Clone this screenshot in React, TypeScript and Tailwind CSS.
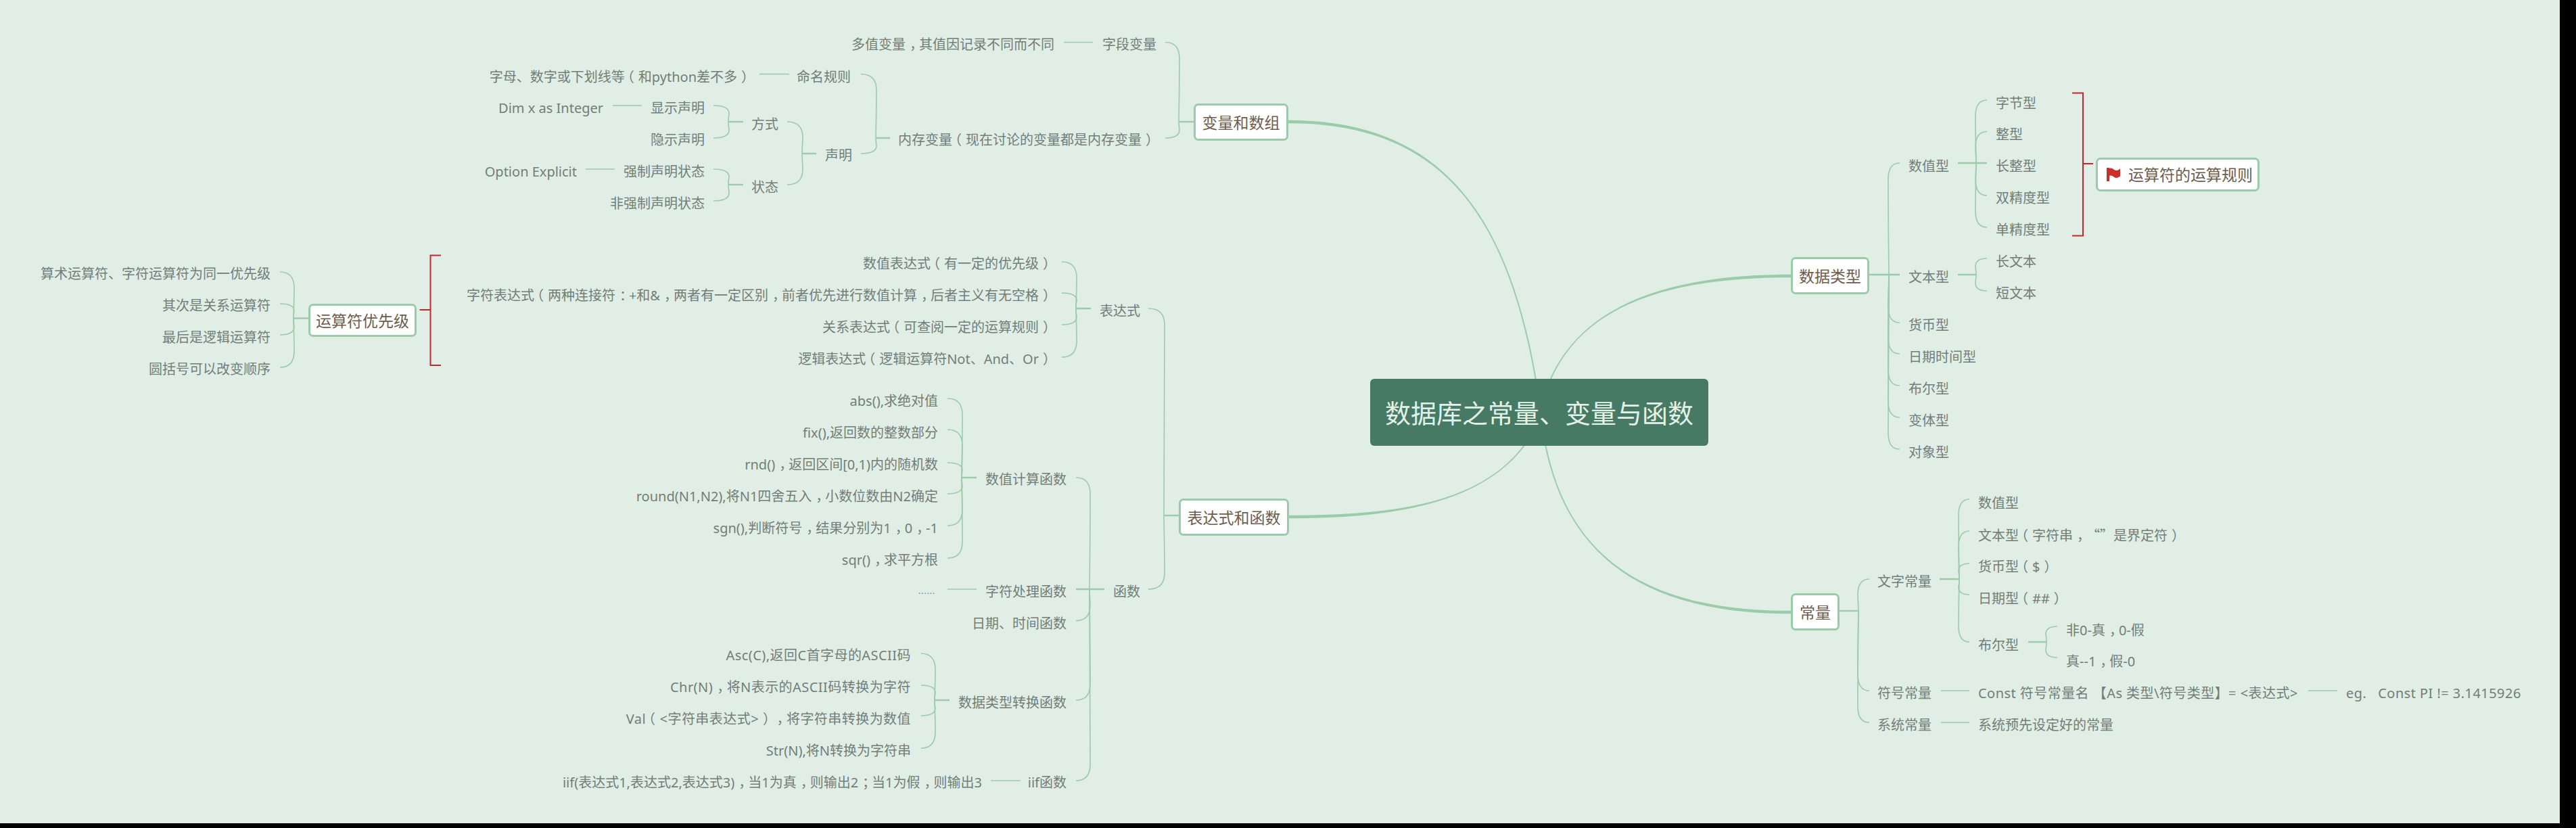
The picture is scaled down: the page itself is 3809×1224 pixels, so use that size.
const LINE = "#9bcbab";
const RED = "#c4262e";
const FONT = "font-['Noto_Sans','Noto_Sans_CJK_SC',sans-serif]";

// text, x anchor, centre y
type T = [string, number, number];
const rightAnchored: T[] = [
  ["多值变量，其值因记录不同而不同", 1559, 66],
  ["字段变量", 1710, 66],
  ["内存变量（现在讨论的变量都是内存变量）", 1708, 207],
  ["命名规则", 1258, 114],
  ["字母、数字或下划线等（和python差不多）", 1110, 114],
  ["声明", 1260, 230],
  ["方式", 1151, 184],
  ["状态", 1151, 277],
  ["显示声明", 1042, 160],
  ["隐示声明", 1042, 207],
  ["强制声明状态", 1042, 254],
  ["非强制声明状态", 1042, 301],
  ["Dim x as Integer", 892, 160],
  ["Option Explicit", 853, 254],
  ["表达式", 1686, 460],
  ["数值表达式（有一定的优先级）", 1556, 390],
  ["字符表达式（两种连接符：+和&，两者有一定区别，前者优先进行数值计算，后者主义有无空格）", 1556, 437],
  ["关系表达式（可查阅一定的运算规则）", 1556, 484],
  ["逻辑表达式（逻辑运算符Not、And、Or）", 1556, 531],
  ["函数", 1686, 875],
  ["数值计算函数", 1577, 709],
  ["字符处理函数", 1577, 875],
  ["日期、时间函数", 1577, 922],
  ["数据类型转换函数", 1577, 1039],
  ["iif函数", 1577, 1157],
  ["abs(),求绝对值", 1387, 593],
  ["fix(),返回数的整数部分", 1387, 640],
  ["rnd()，返回区间[0,1)内的随机数", 1387, 687],
  ["round(N1,N2),将N1四舍五入，小数位数由N2确定", 1387, 734],
  ["sgn(),判断符号，结果分别为1，0，-1", 1387, 781],
  ["sqr()，求平方根", 1387, 828],
  ["Asc(C),返回C首字母的ASCII码", 1347, 969],
  ["Chr(N)，将N表示的ASCII码转换为字符", 1347, 1016],
  ["Val（<字符串表达式>），将字符串转换为数值", 1347, 1063],
  ["Str(N),将N转换为字符串", 1347, 1110],
  ["iif(表达式1,表达式2,表达式3)，当1为真，则输出2；当1为假，则输出3", 1452, 1157],
  ["算术运算符、字符运算符为同一优先级", 400, 405],
  ["其次是关系运算符", 400, 452],
  ["最后是逻辑运算符", 400, 499],
  ["圆括号可以改变顺序", 400, 546],
];
const leftAnchored: T[] = [
  ["数值型", 2822, 246],
  ["文本型", 2822, 410],
  ["货币型", 2822, 481],
  ["日期时间型", 2822, 528],
  ["布尔型", 2822, 575],
  ["变体型", 2822, 622],
  ["对象型", 2822, 669],
  ["字节型", 2951, 153],
  ["整型", 2951, 199],
  ["长整型", 2951, 246],
  ["双精度型", 2951, 293],
  ["单精度型", 2951, 340],
  ["长文本", 2951, 387],
  ["短文本", 2951, 434],
  ["文字常量", 2776, 860],
  ["符号常量", 2776, 1025],
  ["系统常量", 2776, 1072],
  ["数值型", 2925, 744],
  ["文本型（字符串，“”是界定符）", 2925, 791],
  ["货币型（$）", 2925, 838],
  ["日期型（##）", 2925, 885],
  ["布尔型", 2925, 954],
  ["非0-真，0-假", 3055, 932],
  ["真--1，假-0", 3055, 978],
  ["Const 符号常量名 【As 类型\\符号类型】= <表达式>", 2925, 1025],
  ["eg.   Const PI != 3.1415926", 3469, 1025],
  ["系统预先设定好的常量", 2925, 1072],
];

// x, y, w, h, label
const topics: [string, number, number, number, number][] = [
  ["变量和数组", 1765, 153, 140, 55],
  ["表达式和函数", 1743, 737, 163, 55],
  ["运算符优先级", 456, 449, 160, 49],
  ["数据类型", 2648, 380, 116, 55],
  ["常量", 2648, 877, 72, 55],
];

// child end x, vertical x, parent stub end x, parent y, child y[]
type B = [number, number, number, number, number[]];
const brackets: B[] = [
  [1723, 1743, 1765, 180, [62.5, 204]],
  [1273, 1295, 1316, 204, [109.5, 227]],
  [1164, 1186, 1207, 227, [180, 273]],
  [1055, 1077, 1099, 180, [156, 204]],
  [1055, 1077, 1099, 273, [250, 297]],
  [1570, 1591, 1613, 456, [387, 433, 480, 528]],
  [1698, 1721, 1743, 762, [456, 871]],
  [1591, 1611, 1633, 871, [706, 871, 917.5, 1035, 1154]],
  [1401, 1422, 1444, 706, [589, 635, 684, 730, 777, 825]],
  [1362, 1382, 1404, 1035, [966, 1013, 1058, 1106]],
  [414, 434, 456, 470.5, [402, 449, 495, 543]],
  [2809, 2793, 2764, 406, [241, 406, 477, 523, 570, 617, 664]],
  [2938, 2922, 2895, 241, [148, 194.5, 241, 289, 336]],
  [2938, 2922, 2895, 406, [382, 430]],
  [2764, 2748, 2720, 903, [856, 1021, 1068]],
  [2912, 2897, 2868, 856, [738, 785, 833, 879, 949]],
  [3042, 3026, 2999, 949, [926, 972]],
];

const lines: [number, number, number][] = [
  [1573, 1616, 62.5],
  [1123, 1167, 109.5],
  [906, 949, 156],
  [866, 909, 250],
  [1401, 1444, 871],
  [1465, 1509, 1154],
  [2870, 2912, 1021],
  [3413, 3456, 1021],
  [2870, 2912, 1068],
];

function bracketPaths([cx, vx, px, py, ys]: B) {
  const dir = px > vx ? 1 : -1;
  const out: string[] = [];
  for (const y of ys) {
    const d = Math.abs(py - y);
    if (d < 2) continue;
    const s = py > y ? 1 : -1;
    const r = Math.min(d / 2, 24);
    out.push(
      `M${cx} ${y}Q${vx + dir * 1} ${y} ${vx + dir * 1} ${y + s * r}C${vx + dir * 1} ${y + s * d * 0.6} ${vx} ${py - s * 8} ${vx} ${py}`
    );
  }
  return out;
}

function stubEnd(b: B) {
  const [cx, vx, , py, ys] = b;
  return ys.some((y) => Math.abs(y - py) < 2) ? cx : vx;
}

// tapered curve: horizontal tangent at p0, near-vertical at p3
function taper(
  x0: number,
  y0: number,
  x1: number,
  y1: number,
  x2: number,
  y2: number,
  x3: number,
  y3: number,
  w0: number,
  w1: number
) {
  return `M${x0} ${y0 - w0}C${x1} ${y1 - w0} ${x2 + w1} ${y2} ${x3 + w1} ${y3}L${x3 - w1} ${y3}C${x2 - w1} ${y2} ${x1} ${y1 + w0} ${x0} ${y0 + w0}Z`;
}

function Connectors() {
  return (
    <svg className="absolute left-0 top-0" width={3785} height={1217} fill="none">
      <path d={taper(1905, 180, 2110, 180, 2225, 290, 2271, 562, 2.2, 1)} fill={LINE} />
      <path d={taper(1906, 764, 2060, 764, 2190, 745, 2255, 657, 2.2, -1.2)} fill={LINE} />
      <path d={taper(2648, 408, 2440, 408, 2335, 465, 2292, 562, 2.2, -1)} fill={LINE} />
      <path d={taper(2648, 905, 2440, 905, 2320, 830, 2285, 657, 2.2, 1)} fill={LINE} />
      {brackets.map((b, i) => (
        <g key={i} stroke={LINE}>
          {bracketPaths(b).map((d, j) => (
            <path key={j} d={d} strokeWidth={1.6} />
          ))}
          <path d={`M${stubEnd(b)} ${b[3]}L${b[2]} ${b[3]}`} strokeWidth={2.4} />
        </g>
      ))}
      {lines.map(([a, c, y], i) => (
        <path key={i} d={`M${a} ${y}L${c} ${y}`} stroke={LINE} strokeWidth={1.6} />
      ))}
      <path d="M652 377.5H636.5V540H652M620.5 458H636.5" stroke={RED} strokeWidth={2} />
      <path d="M3064 137.5H3080V348.5H3064M3080 242H3095" stroke={RED} strokeWidth={2} />
    </svg>
  );
}

function Flag() {
  return (
    <svg width={21} height={20} viewBox="0 0 21 20" className="shrink-0">
      <path d="M0 0H4V20H0Z" fill="#c9302c" />
      <path d="M4 1C8 -1 11 4 14 4C16.500 4 18 2.500 20 1.500V12.500C18 14 16 15 14 15C11 15 8 10 4 12Z" fill="#c9302c" />
    </svg>
  );
}

// The reference's fullwidth punctuation sits in the middle of its em box.
function Txt({ s }: { s: string }) {
  return (
    <>
      {s.split(/([，；：（）“”])/).map((p, i) => {
        if (p === "（") return <span key={i} className="relative left-[-0.3em]">{p}</span>;
        if (p === "，" || p === "；" || p === "：" || p === "）")
          return <span key={i} className="relative left-[0.3em]">{p}</span>;
        if (p === "“" || p === "”")
          return <span key={i} className="font-['Noto_Sans_CJK_SC']">{p}</span>;
        return p;
      })}
    </>
  );
}

// Lines whose Latin runs wider in the reference than in the stand-in font.
function wide(s: string) {
  return /^(Const|eg\.|Asc|Chr|Val)/.test(s) ? "tracking-[0.45px]" : "";
}

export default function App() {
  return (
    <div className={`w-[3809px] h-[1224px] bg-black overflow-hidden [text-spacing-trim:space-all] ${FONT}`}>
      <div className="relative w-[3785px] h-[1217px] bg-[#e0eee6]">
        <Connectors />

        <div className="absolute left-[2026px] top-[560px] w-[500px] h-[99px] pt-[2px] rounded-[6px] bg-[#467a65] flex items-center justify-center text-[38px] text-[#e2f1e9] whitespace-nowrap">
          数据库之常量、变量与函数
        </div>

        {topics.map(([label, x, y, w, h]) => (
          <div
            key={label}
            className="absolute flex items-center justify-center pt-[2px] rounded-[7px] border-[3px] border-[#9bcbab] bg-white text-[23px] leading-none whitespace-nowrap text-[#6e5c4e]"
            style={{ left: x, top: y, width: w, height: h }}
          >
            {label}
          </div>
        ))}

        <div className="absolute left-[3099px] top-[233px] w-[242px] h-[50px] flex items-center gap-[11px] pl-[13px] rounded-[7px] border-[3px] border-[#9bcbab] bg-white text-[23px] leading-none whitespace-nowrap text-[#6e5c4e]">
          <Flag />
          <span>运算符的运算规则</span>
        </div>

        {rightAnchored.map(([t, x, y], i) => (
          <div
            key={i}
            className={`absolute h-[30px] leading-[30px] text-[20px] text-[#737d78] whitespace-pre ${wide(t)}`}
            style={{ right: 3785 - x, top: y - 15 }}
          >
            <Txt s={t} />
          </div>
        ))}
        {leftAnchored.map(([t, x, y], i) => (
          <div
            key={i}
            className={`absolute h-[30px] leading-[30px] text-[20px] text-[#737d78] whitespace-pre ${wide(t)}`}
            style={{ left: x, top: y - 15 }}
          >
            <Txt s={t} />
          </div>
        ))}
        <div className="absolute left-[1358px] top-[867px] h-[14px] leading-[14px] text-[12px] tracking-[1px] text-[#737d78]">
          ......
        </div>
      </div>
    </div>
  );
}
